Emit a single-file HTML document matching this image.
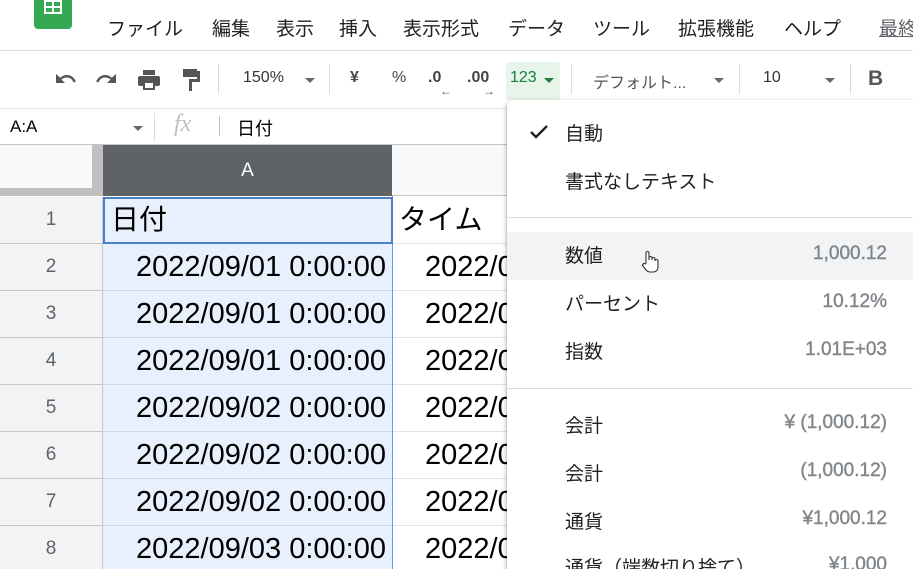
<!DOCTYPE html>
<html><head><meta charset="utf-8">
<style>
*{margin:0;padding:0;box-sizing:border-box}
html,body{width:913px;height:569px;overflow:hidden}
body{background:#fff;position:relative;font-family:"Liberation Sans","Noto Sans CJK JP",sans-serif;color:#202124}
.a{position:absolute;white-space:nowrap}
.menu{top:14px;font-size:19px;color:#202124}
.tb{top:69px;font-size:16px;color:#444}
.sep{position:absolute;width:1px;background:#dadce0}
.tri{position:absolute;width:0;height:0;border-left:5px solid transparent;border-right:5px solid transparent;border-top:5px solid #666}
.rh{position:absolute;left:0;width:103px;height:47px;background:#f1f3f4;border-bottom:1px solid #c4c7c5;border-right:1px solid #c4c7c5;text-align:center;font-size:19px;color:#5f6368;line-height:46px}
.ca{position:absolute;left:103px;width:289px;height:47px;background:#e8f0fe;border-bottom:1px solid #d0d7e2;font-size:29px;line-height:46px;text-align:right;padding-right:6px;color:#000}
.cb{position:absolute;left:393px;width:114px;height:47px;border-bottom:1px solid #e2e3e3;font-size:29px;line-height:46px;padding-left:32px;color:#000;overflow:hidden}
.dd{position:absolute;left:507px;top:100px;width:410px;height:480px;background:#fff;border-radius:6px;box-shadow:0 2px 6px rgba(0,0,0,.3),0 1px 2px rgba(0,0,0,.2)}
.it{position:absolute;left:58px;font-size:19px;color:#202124}
.vl{position:absolute;right:30px;font-size:19px;color:#80868b;text-align:right;-webkit-text-stroke:0.4px #80868b}
</style></head><body>
<div class="a" style="left:34px;top:-8px;width:38px;height:37px;background:#34a853;border-radius:4px"></div>
<div class="a" style="left:44px;top:0;width:18px;height:14px;background:#fff"></div>
<div class="a" style="left:46px;top:2px;width:6px;height:4px;background:#34a853"></div>
<div class="a" style="left:54px;top:2px;width:6px;height:4px;background:#34a853"></div>
<div class="a" style="left:46px;top:8px;width:6px;height:4px;background:#34a853"></div>
<div class="a" style="left:54px;top:8px;width:6px;height:4px;background:#34a853"></div>
<div class="a menu" style="left:107px">ファイル</div>
<div class="a menu" style="left:212px">編集</div>
<div class="a menu" style="left:276px">表示</div>
<div class="a menu" style="left:339px">挿入</div>
<div class="a menu" style="left:403px">表示形式</div>
<div class="a menu" style="left:508px">データ</div>
<div class="a menu" style="left:593px">ツール</div>
<div class="a menu" style="left:678px">拡張機能</div>
<div class="a menu" style="left:784px">ヘルプ</div>
<div class="a menu" style="left:879px;color:#5f6368;text-decoration:underline">最終</div>
<div class="a" style="left:0;top:50px;width:913px;height:1px;background:#dadce0"></div>
<svg class="a" style="left:52px;top:70px" width="26" height="20" viewBox="0 0 26 20"><path d="M4 4v9h9l-3.5-3.5C11 8 13 7.5 15 7.5c3 0 5.5 2 6.5 5l2.3-.8C22.5 7.8 19 5 15 5c-2.7 0-5 1-6.8 2.7z" fill="#555"/></svg>
<svg class="a" style="left:94px;top:70px" width="26" height="20" viewBox="0 0 26 20"><path d="M22 4v9h-9l3.5-3.5C15 8 13 7.5 11 7.5c-3 0-5.5 2-6.5 5l-2.3-.8C3.5 7.8 7 5 11 5c2.7 0 5 1 6.8 2.7z" fill="#555"/></svg>
<svg class="a" style="left:136px;top:68px" width="26" height="24" viewBox="0 0 26 24"><rect x="7" y="2" width="12" height="5" fill="#555"/><rect x="2" y="8" width="22" height="10" rx="2" fill="#555"/><rect x="7" y="14" width="12" height="8" fill="#555"/><rect x="9" y="15" width="8" height="5" fill="#fff"/></svg>
<svg class="a" style="left:180px;top:67px" width="22" height="26" viewBox="0 0 22 26"><rect x="3" y="2" width="14" height="8" fill="#555"/><rect x="17" y="4" width="3" height="8" fill="#555"/><rect x="9" y="12" width="11" height="3" fill="#555"/><rect x="9" y="12" width="3" height="12" fill="#555"/></svg>
<div class="sep" style="left:218px;top:64px;height:30px"></div>
<div class="a tb" style="left:243px;color:#333">150%</div>
<div class="tri" style="left:305px;top:78px"></div>
<div class="sep" style="left:329px;top:64px;height:30px"></div>
<div class="a tb" style="left:350px;font-weight:bold;color:#444">¥</div>
<div class="a tb" style="left:392px">%</div>
<div class="a tb" style="left:428px;font-weight:bold">.0</div>
<div class="a" style="left:440px;top:84px;font-size:12px;color:#555">←</div>
<div class="a tb" style="left:467px;font-weight:bold">.00</div>
<div class="a" style="left:483px;top:84px;font-size:12px;color:#555">→</div>
<div class="a" style="left:506px;top:62px;width:54px;height:38px;background:#e6f4ea;border-radius:3px"></div>
<div class="a tb" style="left:510px;color:#188038">123</div>
<div class="tri" style="left:544px;top:78px;border-top-color:#188038"></div>
<div class="sep" style="left:571px;top:64px;height:30px"></div>
<div class="a tb" style="left:593px;color:#555">デフォルト...</div>
<div class="tri" style="left:714px;top:78px"></div>
<div class="sep" style="left:739px;top:64px;height:30px"></div>
<div class="a tb" style="left:763px;color:#333">10</div>
<div class="tri" style="left:825px;top:78px"></div>
<div class="sep" style="left:850px;top:64px;height:30px"></div>
<div class="a" style="left:868px;top:67px;font-size:21px;font-weight:bold;color:#555">B</div>
<div class="a" style="left:0;top:108px;width:913px;height:1px;background:#e0e0e0"></div>
<div class="a" style="left:10px;top:117px;font-size:17px;color:#000">A:A</div>
<div class="tri" style="left:133px;top:126px"></div>
<div class="sep" style="left:154px;top:113px;height:28px"></div>
<div class="a" style="left:174px;top:111px;font-size:24px;font-style:italic;font-family:'Liberation Serif',serif;color:#c0c0c0">fx</div>
<div class="sep" style="left:219px;top:116px;height:20px;background:#c0c0c0"></div>
<div class="a" style="left:237px;top:115px;font-size:18px;color:#000">日付</div>
<div class="a" style="left:0;top:144px;width:913px;height:1px;background:#c4c7c5"></div>
<div class="a" style="left:0;top:145px;width:103px;height:51px;background:#c0c0c0"></div>
<div class="a" style="left:0;top:145px;width:92px;height:43px;background:#f8f9fa"></div>
<div class="a" style="left:103px;top:145px;width:289px;height:51px;background:#5f6368;color:#fff;text-align:center;font-size:19px;line-height:51px">A</div>
<div class="a" style="left:392px;top:145px;width:130px;height:51px;background:#f8f9fa;border-bottom:1px solid #c4c7c5"></div>
<div class="rh" style="top:197px">1</div>
<div class="rh" style="top:244px">2</div>
<div class="rh" style="top:291px">3</div>
<div class="rh" style="top:338px">4</div>
<div class="rh" style="top:385px">5</div>
<div class="rh" style="top:432px">6</div>
<div class="rh" style="top:479px">7</div>
<div class="rh" style="top:526px">8</div>
<div class="ca" style="top:244px">2022/09/01 0:00:00</div>
<div class="ca" style="top:291px">2022/09/01 0:00:00</div>
<div class="ca" style="top:338px">2022/09/01 0:00:00</div>
<div class="ca" style="top:385px">2022/09/02 0:00:00</div>
<div class="ca" style="top:432px">2022/09/02 0:00:00</div>
<div class="ca" style="top:479px">2022/09/02 0:00:00</div>
<div class="ca" style="top:526px">2022/09/03 0:00:00</div>
<div class="a" style="left:392px;top:196px;width:1px;height:373px;background:#1a73e8;opacity:.7"></div>
<div class="a" style="left:103px;top:197px;width:290px;height:47px;background:#e8f0fe;border:2px solid #4a80c8;font-size:28px;line-height:42px;padding-left:6px;color:#000">日付</div>
<div class="cb" style="top:197px;padding-left:6px;font-size:28px">タイムスタンプ</div>
<div class="cb" style="top:244px">2022/09/01</div>
<div class="cb" style="top:291px">2022/09/01</div>
<div class="cb" style="top:338px">2022/09/01</div>
<div class="cb" style="top:385px">2022/09/02</div>
<div class="cb" style="top:432px">2022/09/02</div>
<div class="cb" style="top:479px">2022/09/02</div>
<div class="cb" style="top:526px">2022/09/03</div>
<div class="dd">
<svg class="a" style="left:22px;top:24px" width="20" height="16" viewBox="0 0 20 16"><path d="M2 8l5 5L18 2" stroke="#202124" stroke-width="2.4" fill="none"/></svg>
<div class="it" style="top:19px">自動</div>
<div class="it" style="top:67px">書式なしテキスト</div>
<div class="a" style="left:0;top:117px;width:410px;height:1px;background:#dadce0"></div>
<div class="a" style="left:0;top:132px;width:410px;height:48px;background:#f1f3f4"></div>
<div class="it" style="top:141px">数値</div>
<div class="vl" style="top:143px">1,000.12</div>
<svg class="a" style="left:134px;top:150px" width="18" height="24" viewBox="0 0 18 24"><path d="M5 13V3a1.5 1.5 0 013 0v7 -2a1.5 1.5 0 013 0v2-1a1.5 1.5 0 013 0v2a1.5 1.5 0 013 0v6c0 3-2 5-5 5H9c-2 0-3-1-4-2l-3-4a1.4 1.4 0 012-2z" fill="#fff" stroke="#333" stroke-width="1.1"/></svg>
<div class="it" style="top:189px">パーセント</div>
<div class="vl" style="top:191px">10.12%</div>
<div class="it" style="top:237px">指数</div>
<div class="vl" style="top:239px">1.01E+03</div>
<div class="a" style="left:0;top:288px;width:410px;height:1px;background:#dadce0"></div>
<div class="it" style="top:311px">会計</div>
<div class="vl" style="top:312px">¥ (1,000.12)</div>
<div class="it" style="top:359px">会計</div>
<div class="vl" style="top:360px">(1,000.12)</div>
<div class="it" style="top:407px">通貨</div>
<div class="vl" style="top:408px">¥1,000.12</div>
<div class="it" style="top:453px">通貨（端数切り捨て）</div>
<div class="vl" style="top:454px">¥1,000</div>
</div>
</body></html>
